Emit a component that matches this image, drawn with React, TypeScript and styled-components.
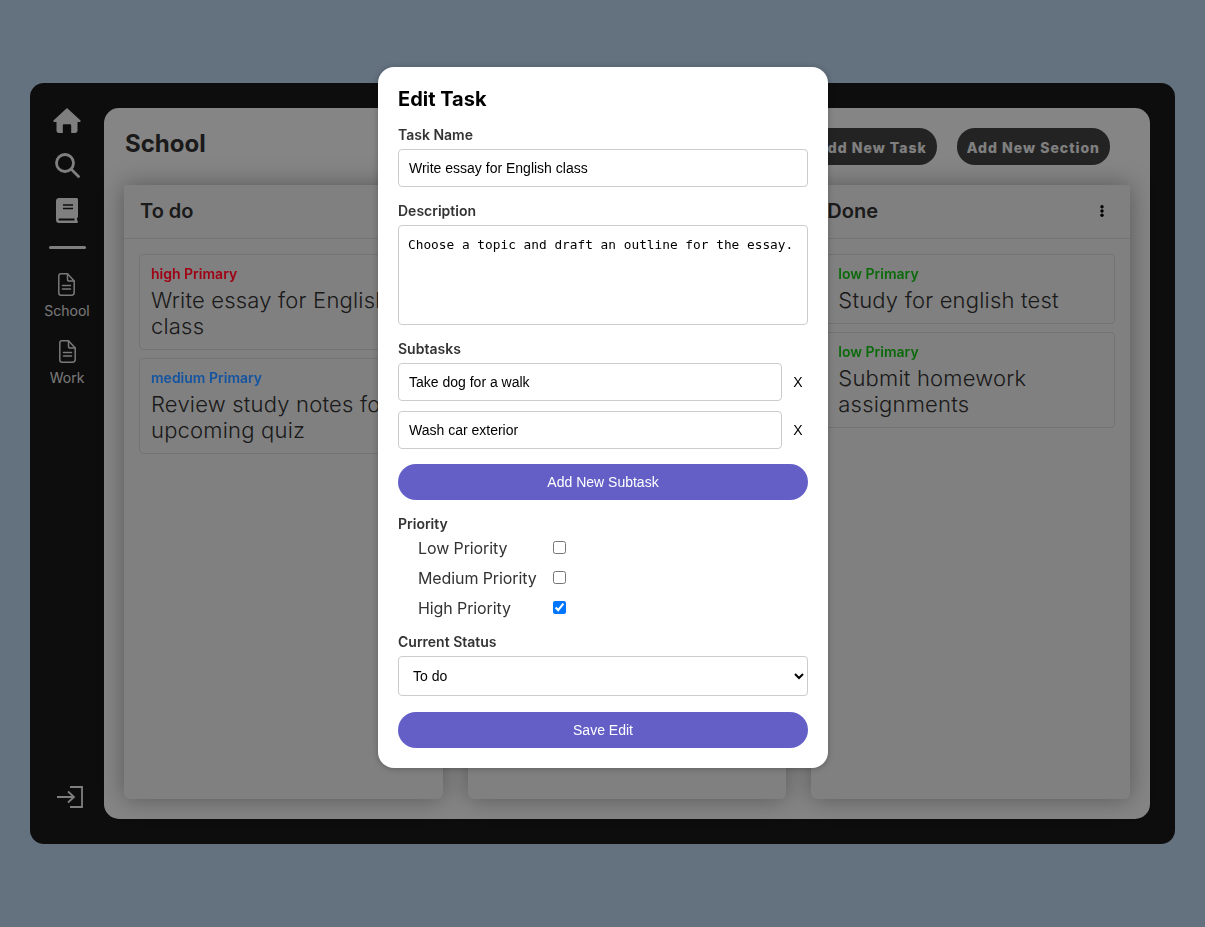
import React from "react";
import styled, { createGlobalStyle } from "styled-components";

const Global = createGlobalStyle`
  * { box-sizing: border-box; }
  html, body { margin: 0; height: 100%; }
  body { background: #c0d9f4; font-family: Inter, "Liberation Sans", sans-serif; color: #333; }
`;

const Page = styled.div`
  height: 927px;
  padding: 83px 30px;
`;
const Shell = styled.div`
  height: 761px;
  background: #191919;
  border-radius: 14px;
  display: flex;
  padding: 25px 25px 25px 0;
`;
const Sidebar = styled.nav`
  width: 74px;
  flex: none;
  display: flex;
  flex-direction: column;
  align-items: center;
  color: #f4f4f4;
`;
const IconStack = styled.div`
  display: flex;
  flex-direction: column;
  align-items: center;
  gap: 20px;
`;
const IconSlot = styled.div`
  height: 25px;
  display: flex;
  align-items: center;
  justify-content: center;
`;
const Divider = styled.hr`
  width: 37px;
  height: 3px;
  margin: 23px 0 24px;
  border: 0;
  background: #f4f4f4;
  border-radius: 2px;
`;
const NavItem = styled.a`
  display: flex;
  flex-direction: column;
  align-items: center;
  height: 67px;
  font-size: 14px;
  line-height: 17px;
  color: #e8e8e8;
  svg { margin-bottom: 6px; }
`;
const LogoutSlot = styled.div`
  margin-top: auto;
  margin-bottom: 11px;
  padding-left: 5px;
  height: 22px;
`;
const Main = styled.main`
  flex: 1;
  background: #fff;
  border-radius: 15px;
  padding: 20px;
  display: flex;
  flex-direction: column;
  gap: 20px;
  min-width: 0;
`;
const Header = styled.header`
  display: flex;
  align-items: center;
  height: 37px;
  gap: 20px;
  padding-right: 20px;
`;
const Title = styled.h1`
  margin: 0 auto 6px 1px;
  font-size: 24px;
  font-weight: 700;
  color: #333;
`;
const PillButton = styled.button`
  height: 37px;
  padding: 1px 10px 0;
  border: 0;
  border-radius: 18px;
  background: #444;
  color: #f4f4f4;
  font: 800 14px Inter, sans-serif;
  letter-spacing: 1px;
`;
const Board = styled.div`
  flex: 1;
  display: grid;
  grid-template-columns: repeat(3, 1fr);
  gap: 25px;
  min-height: 0;
`;
const Column = styled.section`
  background: #f6f6f6;
  border-radius: 2px 2px 6px 6px;
  box-shadow: 0 0 25px rgba(0, 0, 0, 0.35);
`;
const ColumnHead = styled.div`
  height: 54px;
  padding: 0 26px 2px 16px;
  display: flex;
  align-items: center;
  justify-content: space-between;
  border-bottom: 1px solid #ddd;
`;
const ColumnTitle = styled.h2`
  margin: 0;
  font-size: 20px;
  font-weight: 600;
  color: #333;
`;
const CardList = styled.div`
  padding: 15px;
  display: flex;
  flex-direction: column;
  gap: 8px;
`;
const Card = styled.article`
  border: 1px solid #ddd;
  border-radius: 4px;
  padding: 11px 11px 10px;
`;
const Tag = styled.div<{ $tone: string }>`
  position: relative;
  z-index: 2;
  font-size: 14px;
  line-height: 15px;
  font-weight: 600;
  margin-bottom: 6px;
  color: ${(p) => p.$tone};
`;
const CardTitle = styled.div`
  font-size: 22px;
  line-height: 26px;
  font-weight: 300;
  letter-spacing: 0.2px;
  color: #333;
`;
const Overlay = styled.div`
  position: fixed;
  inset: 0;
  z-index: 1;
  background: rgba(0, 0, 0, 0.48);
`;
const Modal = styled.form`
  position: fixed;
  z-index: 3;
  top: 67px;
  left: 378px;
  width: 450px;
  padding: 20px;
  background: #fff;
  border-radius: 16px;
  box-shadow: 0 1px 6px rgba(0, 0, 0, 0.25);
`;
const ModalTitle = styled.h2`
  margin: 0 0 16px;
  font-size: 20px;
  line-height: 24px;
  font-weight: 700;
  color: #000;
`;
const Label = styled.div`
  font-size: 14px;
  line-height: 15px;
  font-weight: 600;
  color: #333;
  padding-bottom: 7px;
`;
const Field = styled.div`
  margin-bottom: 16px;
`;
const TextInput = styled.input`
  display: block;
  width: 100%;
  height: 38px;
  padding: 0 10px;
  border: 1px solid #ccc;
  border-radius: 4px;
  background: #fff;
  font: 14px "Liberation Sans", Arial, sans-serif;
  color: #000;
  outline: none;
`;
const TextArea = styled.textarea`
  display: block;
  width: 100%;
  height: 100px;
  padding: 10px 9px;
  border: 1px solid #ccc;
  border-radius: 4px;
  font: 12.8px/17px "DejaVu Sans Mono", monospace;
  color: #000;
  resize: none;
  outline: none;
`;
const SubtaskRow = styled.div`
  display: flex;
  align-items: center;
  margin-bottom: 10px;
  width: 410px;
  ${TextInput} { width: 384px; flex: none; }
`;
const RemoveButton = styled.button`
  width: 12px;
  margin-left: 10px;
  flex: none;
  padding: 0;
  border: 0;
  background: none;
  color: #000;
  font: 14px "Liberation Sans", Arial, sans-serif;
`;
const PrimaryButton = styled.button<{ $mt?: number; $mb?: number }>`
  display: block;
  width: 100%;
  height: 36px;
  margin-top: ${(p) => p.$mt ?? 0}px;
  margin-bottom: ${(p) => p.$mb ?? 0}px;
  border: 0;
  border-radius: 18px;
  background: #635fc7;
  color: #fff;
  font: 14px "Liberation Sans", Arial, sans-serif;
`;
const PriorityRow = styled.label`
  display: flex;
  align-items: center;
  height: 30px;
  padding-left: 20px;
  font-size: 16px;
  letter-spacing: -0.1px;
  color: #333;
`;
const PriorityName = styled.span`
  width: 135px;
`;
const Check = styled.input`
  width: 13px;
  height: 13px;
  margin: 0 0 1px;
`;
const PriorityGroup = styled.div`
  margin-bottom: 11px;
  ${Label} { padding-bottom: 2px; }
`;
const StatusSelect = styled.select`
  display: block;
  width: 100%;
  height: 40px;
  padding: 0 10px;
  border: 1px solid #ccc;
  border-radius: 4px;
  background: #fff;
  font: 14px "Liberation Sans", Arial, sans-serif;
  color: #000;
  outline: none;
`;

const HomeIcon = () => (
  <svg width="28" height="25" viewBox="0 0 28 25" fill="currentColor">
    <path d="M14 0 27.3 12.2c.8.8.3 1.8-.7 1.8H24.500V22.800c0 1.200-1 2.200-2.200 2.200H18.200V17.500c0-.8-.6-1.300-1.300-1.300H11.100c-.7 0-1.300.5-1.300 1.300V25H5.700c-1.200 0-2.200-1-2.200-2.200V14H1.400c-1 0-1.500-1-.7-1.800Z" />
  </svg>
);
const SearchIcon = () => (
  <svg width="25" height="25" viewBox="0 0 25 25" fill="none" stroke="currentColor" strokeWidth="2.800">
    <circle cx="10" cy="10" r="8.500" />
    <path d="M16.500 16.500 23.500 23.500" strokeLinecap="round" />
  </svg>
);
const BookIcon = () => (
  <svg width="22" height="25" viewBox="0 0 22 25" fill="currentColor">
    <path
      fillRule="evenodd"
      d="M3 0H20.500C21.300 0 22 .7 22 1.500V18.500C22 19.200 21.500 19.800 21 20V22.500H21.500C21.800 22.500 22 24 21.500 25H3C1.300 25 0 23.700 0 22V3C0 1.300 1.300 0 3 0ZM7 6.200V7.800H17V6.200ZM7 9.700V11.300H17V9.700ZM3.500 20.500C3 20.500 2.500 21 2.500 21.500S3 22.500 3.500 22.500H18.500V20.500Z"
    />
  </svg>
);
const DocIcon = () => (
  <svg width="17" height="23" viewBox="0 0 17 23" fill="none" stroke="currentColor" strokeWidth="1.500" strokeLinejoin="round" strokeLinecap="round">
    <path d="M3 .8H9.500L16.200 8V19.500C16.200 21 15 22.200 13.500 22.200H3C1.700 22.200.8 21 .8 19.700V3C.8 1.700 1.700.8 3 .8Z" />
    <path d="M9.500 1V6.200C9.500 7.200 10.200 8 11.200 8H16" />
    <path d="M4.500 12.500H12.500M4.500 16H12.500" />
  </svg>
);
const LogoutIcon = () => (
  <svg width="26" height="22" viewBox="0 0 26 22" fill="none" stroke="currentColor" strokeWidth="1.800">
    <path d="M13 1H25V21H13" />
    <path d="M0 11H17M11 5.500 17 11 11 16.500" />
  </svg>
);
const DotsIcon = () => (
  <svg width="4" height="12" viewBox="0 0 4 12" fill="#000">
    <circle cx="2" cy="1.700" r="1.700" />
    <circle cx="2" cy="6" r="1.700" />
    <circle cx="2" cy="10.300" r="1.700" />
  </svg>
);

const columns = [
  {
    title: "To do",
    cards: [
      { tag: "high Primary", tone: "#a00014", text: "Write essay for English class" },
      { tag: "medium Primary", tone: "#1454a0", text: "Review study notes for upcoming quiz" },
    ],
  },
  { title: "", cards: [] },
  {
    title: "Done",
    cards: [
      { tag: "low Primary", tone: "#0a6a0a", text: "Study for english test" },
      { tag: "low Primary", tone: "#0a6a0a", text: "Submit homework assignments" },
    ],
  },
];

export default function App() {
  return (
    <Page>
      <Global />
      <Shell>
        <Sidebar>
          <IconStack>
            <IconSlot><HomeIcon /></IconSlot>
            <IconSlot><SearchIcon /></IconSlot>
            <IconSlot><BookIcon /></IconSlot>
          </IconStack>
          <Divider />
          <NavItem><DocIcon />School</NavItem>
          <NavItem><DocIcon />Work</NavItem>
          <LogoutSlot><LogoutIcon /></LogoutSlot>
        </Sidebar>
        <Main>
          <Header>
            <Title>School</Title>
            <PillButton type="button">Add New Task</PillButton>
            <PillButton type="button">Add New Section</PillButton>
          </Header>
          <Board>
            {columns.map((col, i) => (
              <Column key={i}>
                <ColumnHead>
                  <ColumnTitle>{col.title}</ColumnTitle>
                  <DotsIcon />
                </ColumnHead>
                <CardList>
                  {col.cards.map((card) => (
                    <Card key={card.text}>
                      <Tag $tone={card.tone}>{card.tag}</Tag>
                      <CardTitle>{card.text}</CardTitle>
                    </Card>
                  ))}
                </CardList>
              </Column>
            ))}
          </Board>
        </Main>
      </Shell>
      <Overlay />
      <Modal>
        <ModalTitle>Edit Task</ModalTitle>
        <Field>
          <Label>Task Name</Label>
          <TextInput defaultValue="Write essay for English class" />
        </Field>
        <Field>
          <Label>Description</Label>
          <TextArea defaultValue="Choose a topic and draft an outline for the essay." />
        </Field>
        <Label>Subtasks</Label>
        <SubtaskRow>
          <TextInput defaultValue="Take dog for a walk" />
          <RemoveButton type="button">X</RemoveButton>
        </SubtaskRow>
        <SubtaskRow>
          <TextInput defaultValue="Wash car exterior" />
          <RemoveButton type="button">X</RemoveButton>
        </SubtaskRow>
        <PrimaryButton type="button" $mt={15} $mb={16}>Add New Subtask</PrimaryButton>
        <PriorityGroup>
          <Label>Priority</Label>
          <PriorityRow><PriorityName>Low Priority</PriorityName><Check type="checkbox" /></PriorityRow>
          <PriorityRow><PriorityName>Medium Priority</PriorityName><Check type="checkbox" /></PriorityRow>
          <PriorityRow><PriorityName>High Priority</PriorityName><Check type="checkbox" defaultChecked /></PriorityRow>
        </PriorityGroup>
        <Field>
          <Label>Current Status</Label>
          <StatusSelect defaultValue="To do">
            <option>To do</option>
            <option>Doing</option>
            <option>Done</option>
          </StatusSelect>
        </Field>
        <PrimaryButton type="button">Save Edit</PrimaryButton>
      </Modal>
    </Page>
  );
}
